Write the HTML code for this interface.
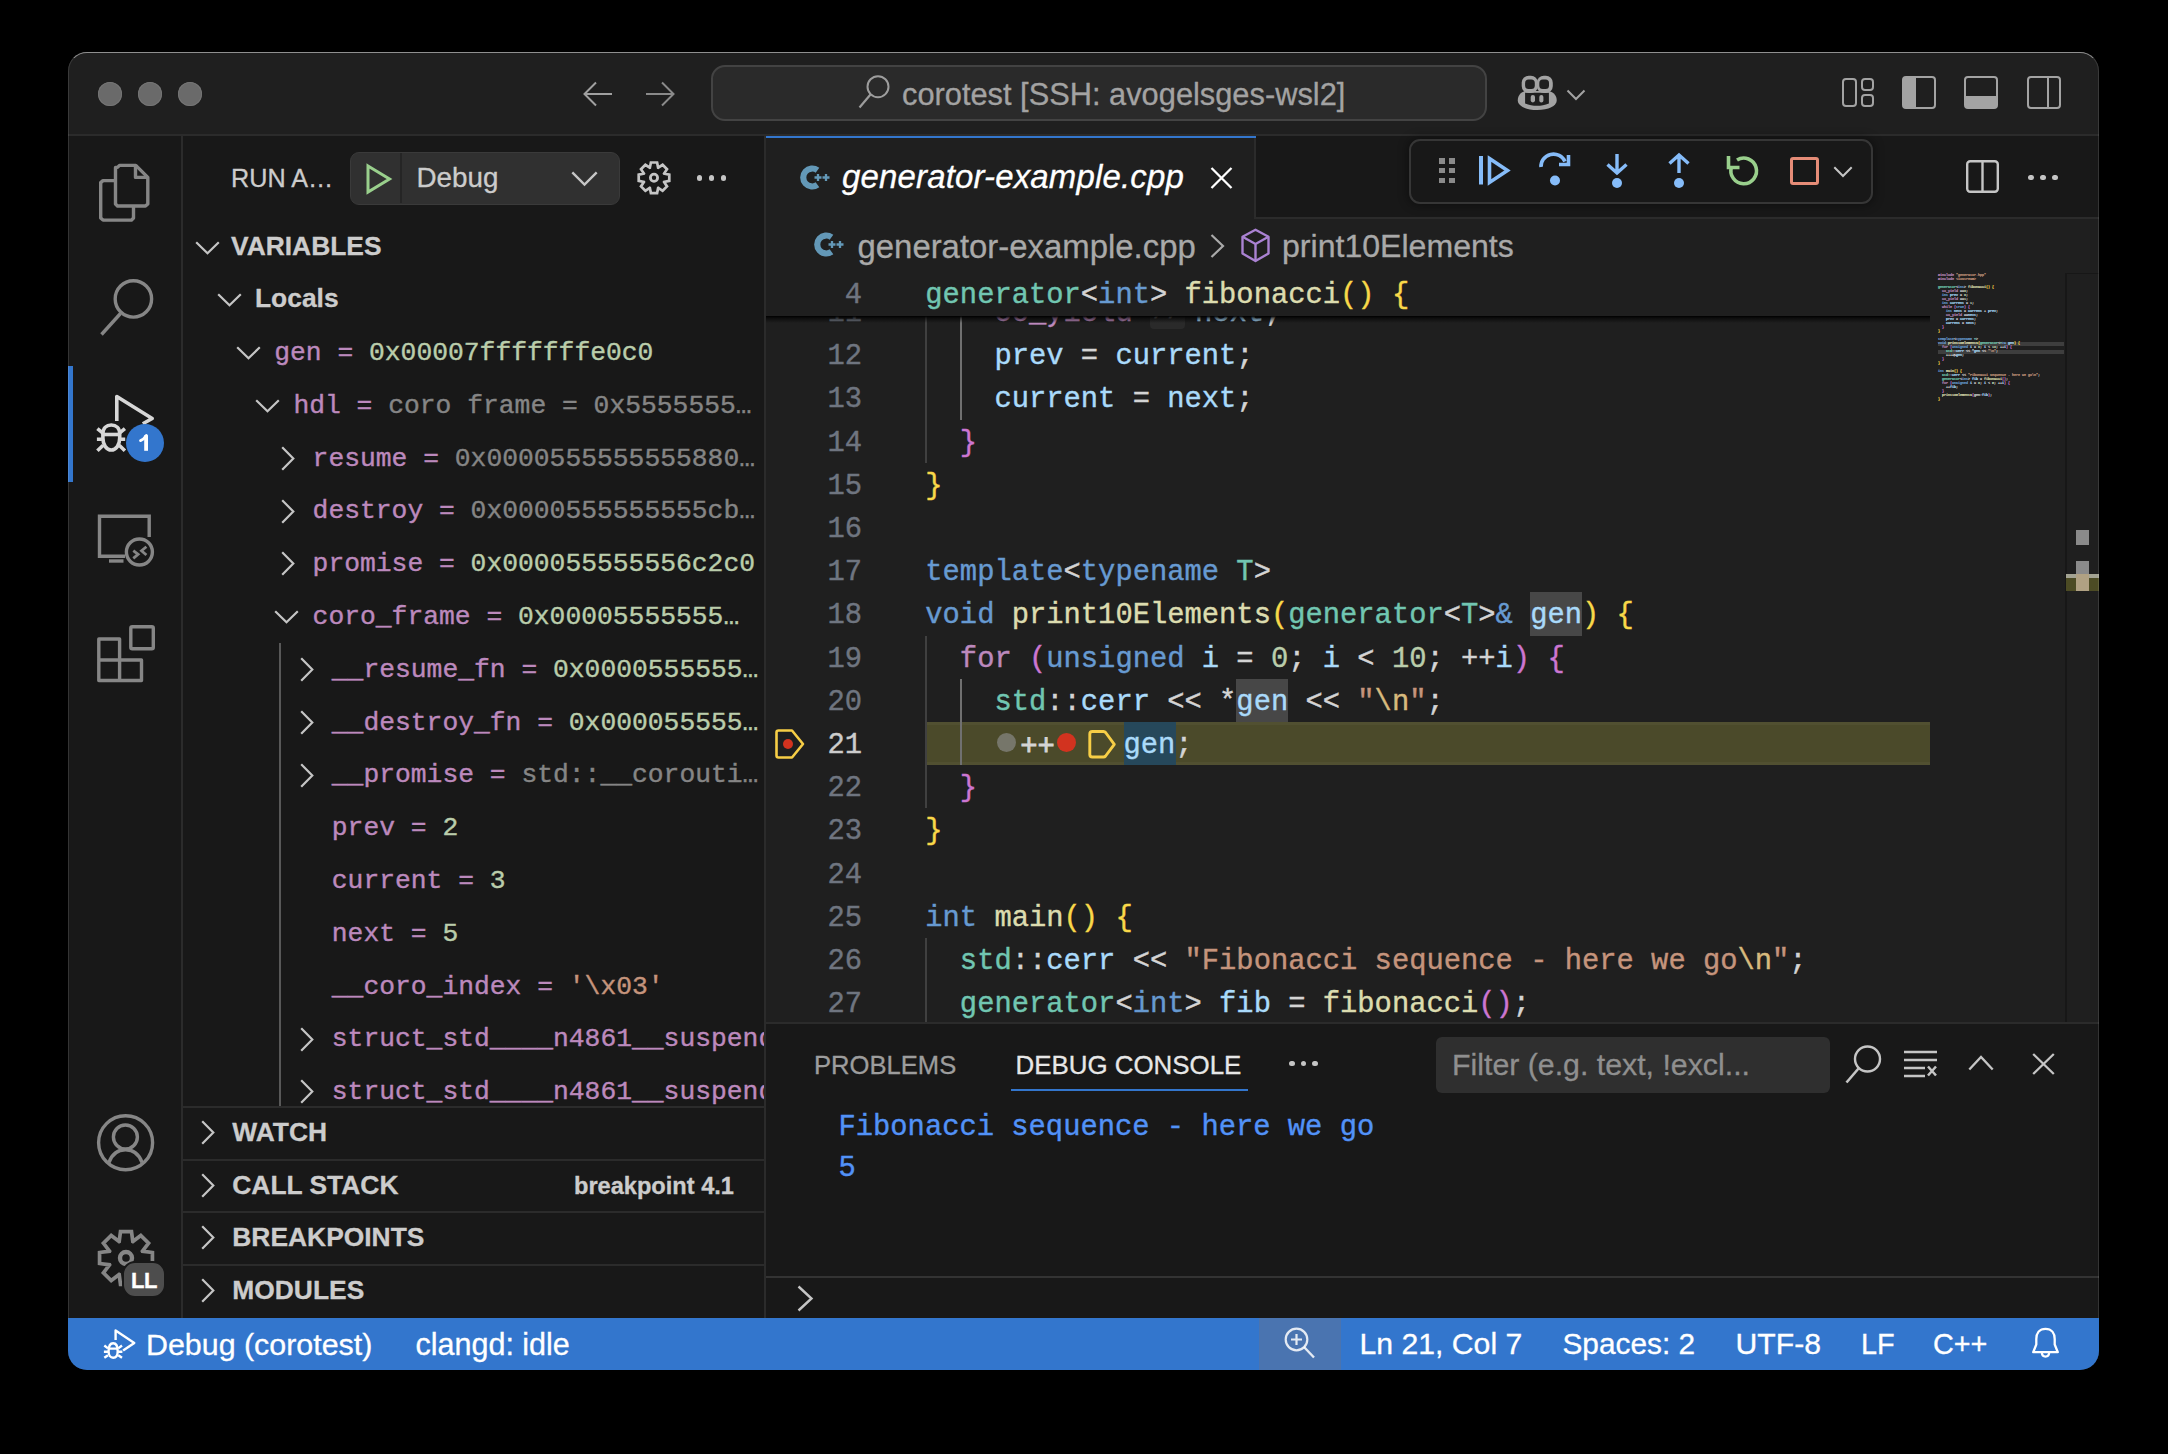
<!DOCTYPE html>
<html><head><meta charset="utf-8">
<style>
*{margin:0;padding:0;box-sizing:border-box}
html,body{width:2168px;height:1454px;background:#000;overflow:hidden;font-family:"Liberation Sans",sans-serif}
#win{position:absolute;left:0;top:0;width:2168px;height:1454px;clip-path:inset(52px 69px 84px 68px round 19px);background:#1f1f1f}
.a{position:absolute}
.t{position:absolute;white-space:nowrap;-webkit-text-stroke-width:0.3px}
.m{font-family:"Liberation Mono",monospace;-webkit-text-stroke-width:0.4px}
svg{position:absolute;overflow:visible}
</style></head><body>
<div id="win">
<!-- TITLEBAR -->
<div class="a" style="left:68px;top:52px;width:2031px;height:84px;background:#1f1f1f;border-bottom:2px solid #2b2b2b"></div>

<!-- traffic lights -->
<div class="a" style="left:98px;top:81.5px;width:24px;height:24px;border-radius:50%;background:#6a6a6a;box-shadow:inset 0 0 0 1px #747474"></div>
<div class="a" style="left:138px;top:81.5px;width:24px;height:24px;border-radius:50%;background:#6a6a6a;box-shadow:inset 0 0 0 1px #747474"></div>
<div class="a" style="left:178px;top:81.5px;width:24px;height:24px;border-radius:50%;background:#6a6a6a;box-shadow:inset 0 0 0 1px #747474"></div>
<!-- nav arrows -->
<svg style="left:583px;top:81px" width="30" height="26" viewBox="0 0 30 26"><path d="M13 1.5 L1.5 13 L13 24.5 M1.5 13 H29" fill="none" stroke="#a0a0a0" stroke-width="2"/></svg>
<svg style="left:646px;top:81px" width="30" height="26" viewBox="0 0 30 26"><path d="M16 1.5 L27.5 13 L16 24.5 M27.5 13 H0" fill="none" stroke="#8a8a8a" stroke-width="2"/></svg>
<!-- command center -->
<div class="a" style="left:711px;top:65px;width:776px;height:56px;border-radius:14px;background:#2a2a2a;border:2px solid #434343"></div>
<svg style="left:858px;top:74px" width="34" height="36" viewBox="0 0 34 36"><circle cx="20" cy="12.7" r="10.5" fill="none" stroke="#9d9d9d" stroke-width="2"/><path d="M12.5 20.5 L1.5 33.5" stroke="#9d9d9d" stroke-width="2.2" fill="none"/></svg>
<div class="t" style="left:902px;top:67.5px;line-height:54px;font-size:30.8px;color:#a3a3a3">corotest [SSH: avogelsges-wsl2]</div>
<!-- copilot -->
<svg style="left:1517px;top:75px" width="40" height="36" viewBox="0 0 40 36"><g fill="#a3a3a3">
<path d="M8 16 C3 17.5 0.8 21 0.8 25.5 C0.8 31 9 35 20.2 35 C31.5 35 39.7 31 39.7 25.5 C39.7 21 37.5 17.5 32 16 Z"/></g>
<path d="M8.1 17.7 H31.9 V28.5 C28 30 24 30.8 20 30.8 C16 30.8 12 30 8.1 28.5 Z" fill="#1f1f1f"/>
<rect x="4.7" y="0.8" width="16.2" height="17.2" rx="7" fill="#a3a3a3"/><rect x="19.8" y="0.8" width="16" height="17.2" rx="7" fill="#a3a3a3"/>
<rect x="8.1" y="4.6" width="9.7" height="9.4" rx="3.5" fill="#1f1f1f"/><rect x="22.3" y="4.6" width="9.7" height="9.4" rx="3.5" fill="#1f1f1f"/>
<rect x="13.7" y="20" width="4.3" height="7.4" rx="2.1" fill="#a3a3a3"/><rect x="22.3" y="20" width="4.1" height="7.4" rx="2" fill="#a3a3a3"/></svg>
<svg style="left:1566px;top:88.5px" width="20" height="12" viewBox="0 0 20 12"><path d="M1.5 1.5 L10 10 L18.5 1.5" fill="none" stroke="#a3a3a3" stroke-width="2"/></svg>
<!-- layout icons -->
<svg style="left:1842px;top:78px" width="32" height="30" viewBox="0 0 32 30"><rect x="1" y="1" width="13" height="27" rx="3" fill="none" stroke="#a3a3a3" stroke-width="2"/><rect x="20" y="1" width="11" height="11" rx="3" fill="none" stroke="#a3a3a3" stroke-width="2"/><rect x="20" y="17" width="11" height="11" rx="3" fill="none" stroke="#a3a3a3" stroke-width="2"/></svg>
<svg style="left:1902px;top:76px" width="34" height="33" viewBox="0 0 34 33"><rect x="1" y="1" width="32" height="31" rx="3" fill="none" stroke="#a3a3a3" stroke-width="2"/><path d="M1 4 Q1 1 4 1 H14 V32 H4 Q1 32 1 29 Z" fill="#a3a3a3"/></svg>
<svg style="left:1964px;top:76px" width="34" height="33" viewBox="0 0 34 33"><rect x="1" y="1" width="32" height="31" rx="3" fill="none" stroke="#a3a3a3" stroke-width="2"/><path d="M1 20 H33 V29 Q33 32 30 32 H4 Q1 32 1 29 Z" fill="#a3a3a3"/></svg>
<svg style="left:2027px;top:76px" width="34" height="33" viewBox="0 0 34 33"><rect x="1" y="1" width="32" height="31" rx="3" fill="none" stroke="#a3a3a3" stroke-width="2"/><path d="M21 1 V32" stroke="#a3a3a3" stroke-width="2"/></svg>
<!-- ACTIVITY BAR -->
<div class="a" style="left:68px;top:136px;width:115px;height:1183px;background:#181818;border-right:2px solid #2b2b2b"></div>

<!-- activity icons -->
<svg style="left:96px;top:160px" width="60" height="66" viewBox="0 0 60 66"><g fill="none" stroke="#868686" stroke-width="3.4" stroke-linejoin="round">
<path d="M21.5 7.4 L23.5 5.4 H39.8 L51.8 17.4 V44 L49.5 46 H21.5 L19.5 44 V7.4 Z"/><path d="M39.5 5.4 V17.4 H51.8"/>
<path d="M19.5 20.6 H7 L4.7 22.6 V58 L7 60.1 H35.5 L37.5 58 V46"/></g></svg>
<svg style="left:96px;top:276px" width="60" height="62" viewBox="0 0 60 62"><g fill="none" stroke="#868686" stroke-width="3.4"><circle cx="37.4" cy="22.9" r="18.2"/><path d="M24.5 37.5 L5.5 58.5"/></g></svg>
<!-- debug active -->
<svg style="left:90px;top:388px" width="70" height="70" viewBox="0 0 70 70"><g fill="none" stroke="#d7d7d7" stroke-width="3.6" stroke-linejoin="round" stroke-linecap="butt">
<path d="M26.8 33 V8.5 L62.2 30.5 L52.8 35.8"/>
<path d="M12.9 46 C12.9 40 16.5 37 21.3 37 C26.1 37 29.7 40 29.7 46 V50 C29.7 57 26.1 62 21.3 62 C16.5 62 12.9 57 12.9 50 Z"/>
<path d="M13 46.5 H29.6"/>
<path d="M7.4 40.7 L12.9 45.1 M34.9 40.7 L29.4 45.1 M6.9 51.2 H11.9 M30.7 51.2 H35.2 M7.4 62.7 L13.2 57.2 M34.9 62.7 L29.2 57.2"/></g></svg>
<div class="a" style="left:125.5px;top:424px;width:38px;height:38px;border-radius:50%;background:#3376cd"></div>
<svg style="left:139px;top:434px" width="11" height="18" viewBox="0 0 11 18"><path d="M7.1 1.2 V16.8" fill="none" stroke="#fff" stroke-width="3.8"/><path d="M1.5 6.6 C3.6 5.9 5.6 4.2 7.3 1.5" fill="none" stroke="#fff" stroke-width="2.8" stroke-linecap="round"/></svg>
<div class="a" style="left:68px;top:366px;width:5px;height:116px;background:#3376cd"></div>
<svg style="left:94px;top:510px" width="64" height="62" viewBox="0 0 64 62"><g fill="none" stroke="#868686" stroke-width="3.4">
<path d="M31 46.3 H5.5 V6.3 H55.2 V27"/><path d="M15 51 H29.5"/><circle cx="45.4" cy="42" r="13"/><path d="M39.3 40.6 L44.1 44.3 L39.3 48.4 M52.4 36.7 L47.5 40.8 L52.4 45" stroke-width="2.8"/></g></svg>
<svg style="left:94px;top:622px" width="64" height="64" viewBox="0 0 64 64"><g fill="none" stroke="#868686" stroke-width="3.4" stroke-linejoin="round">
<path d="M4.8 17 H25.6 V38 H4.8 Z M4.8 38 V58.5 H25.6 V38 M25.6 38 H47.5 V58.5 H25.6"/>
<rect x="36.8" y="4.8" width="22.5" height="22" rx="1.5"/></g></svg>
<!-- account -->
<svg style="left:94px;top:1111px" width="64" height="64" viewBox="0 0 64 64"><g fill="none" stroke="#868686" stroke-width="3.4">
<circle cx="31.6" cy="31.7" r="27"/><circle cx="31.4" cy="26" r="12"/><path d="M15 51.5 C18 43 24 38.8 31.5 38.8 C39 38.8 45 43 48 51.5"/></g></svg>
<!-- gear -->
<svg style="left:93.5px;top:1226px" width="64" height="64" viewBox="0 0 64 64"><g fill="none" stroke="#868686" stroke-width="3.7" stroke-linejoin="miter">
<path id="gearp" d="M25.20 15.55 L26.50 5.57 L37.50 5.57 L38.80 15.55 L38.82 15.56 L46.80 9.42 L54.58 17.20 L48.44 25.18 L48.45 25.20 L58.43 26.50 L58.43 37.50 L48.45 38.80 L48.44 38.82 L54.58 46.80 L46.80 54.58 L38.82 48.44 L38.80 48.45 L37.50 58.43 L26.50 58.43 L25.20 48.45 L25.18 48.44 L17.20 54.58 L9.42 46.80 L15.56 38.82 L15.55 38.80 L5.57 37.50 L5.57 26.50 L15.55 25.20 L15.56 25.18 L9.42 17.20 L17.20 9.42 L25.18 15.56 Z"/>
<circle cx="32" cy="32" r="6" stroke-width="4.4"/></g></svg>
<div class="a" style="left:122px;top:1261px;width:44px;height:37px;border-radius:13px;background:#4d4d4d;border:2px solid #181818"></div>
<div class="t" style="left:122px;top:1261.5px;width:44px;line-height:37px;text-align:center;font-weight:bold;font-size:22px;letter-spacing:-0.5px;color:#fff">LL</div>
<!-- SIDEBAR -->
<div class="a" style="left:183px;top:136px;width:583px;height:1183px;background:#181818;border-right:2px solid #2b2b2b"></div>
<!--SIDE-->
<div class="t" style="left:231px;top:152px;line-height:52px;font-size:25.2px;color:#cccccc">RUN A…</div>
<div class="a" style="left:350px;top:151.5px;width:270px;height:53px;border-radius:9px;background:#303030;border:1.5px solid #3a3a3a"></div>
<div class="a" style="left:400px;top:153px;width:2px;height:50px;background:#252525"></div>
<svg style="left:366px;top:164px" width="26" height="30" viewBox="0 0 26 30"><path d="M2 2 L23.5 15 L2 28 Z" fill="none" stroke="#99cf8c" stroke-width="3" stroke-linejoin="miter"/></svg>
<div class="t" style="left:416.5px;top:152px;line-height:52px;font-size:27.8px;color:#cccccc">Debug</div>
<svg style="left:571px;top:171px" width="27" height="15" viewBox="0 0 27 15"><path d="M1.3 1.3 L13.5 13.5 L25.7 1.3" fill="none" stroke="#c5c5c5" stroke-width="2.4"/></svg>
<svg style="left:636px;top:161px" width="36" height="35" viewBox="0 0 36 35"><g fill="none" stroke="#c5c5c5" stroke-width="2.7" stroke-linejoin="miter"><path d="M13.85 6.72 L14.90 1.51 L21.10 1.51 L22.15 6.72 L22.19 6.74 L26.62 3.80 L31.00 8.18 L28.06 12.61 L28.08 12.65 L33.29 13.70 L33.29 19.90 L28.08 20.95 L28.06 20.99 L31.00 25.42 L26.62 29.80 L22.19 26.86 L22.15 26.88 L21.10 32.09 L14.90 32.09 L13.85 26.88 L13.81 26.86 L9.38 29.80 L5.00 25.42 L7.94 20.99 L7.92 20.95 L2.71 19.90 L2.71 13.70 L7.92 12.65 L7.94 12.61 L5.00 8.18 L9.38 3.80 L13.81 6.74 Z"/><circle cx="18" cy="16.8" r="3.6" stroke-width="2.8"/></g></svg>
<div class="a" style="left:696.9px;top:175.4px;width:5.2px;height:5.2px;border-radius:50%;background:#c5c5c5"></div>
<div class="a" style="left:708.9px;top:175.4px;width:5.2px;height:5.2px;border-radius:50%;background:#c5c5c5"></div>
<div class="a" style="left:720.9px;top:175.4px;width:5.2px;height:5.2px;border-radius:50%;background:#c5c5c5"></div>
<svg style="left:195.3px;top:240.9px" width="25" height="14" viewBox="0 0 25 14"><path d="M1.2 1.2 L12.5 12.3 L23.8 1.2" fill="none" stroke="#c5c5c5" stroke-width="2.2"/></svg>
<div class="t" style="left:231px;top:220px;line-height:53px;font-weight:bold;font-size:26.4px;color:#cccccc">VARIABLES</div>
<svg style="left:216.6px;top:292.9px" width="25" height="14" viewBox="0 0 25 14"><path d="M1.2 1.2 L12.5 12.3 L23.8 1.2" fill="none" stroke="#c5c5c5" stroke-width="2.2"/></svg>
<div class="t" style="left:255px;top:272px;line-height:53px;font-weight:bold;font-size:26.4px;color:#cccccc">Locals</div>
<div class="a" style="left:183px;top:324px;width:581px;height:782px;overflow:hidden">
<svg style="left:52.8px;top:21.7px" width="25" height="14" viewBox="0 0 25 14"><path d="M1.2 1.2 L12.5 12.3 L23.8 1.2" fill="none" stroke="#c5c5c5" stroke-width="2.2"/></svg>
<div class="t m" style="left:91.2px;top:3.0px;line-height:52.8px;font-size:26.33px;color:#bc89bd">gen = <span style="color:#bacdab">0x00007fffffffe0c0</span></div>
<svg style="left:72.0px;top:74.5px" width="25" height="14" viewBox="0 0 25 14"><path d="M1.2 1.2 L12.5 12.3 L23.8 1.2" fill="none" stroke="#c5c5c5" stroke-width="2.2"/></svg>
<div class="t m" style="left:110.4px;top:55.8px;line-height:52.8px;font-size:26.33px;color:#bc89bd">hdl = <span style="color:#858585">coro frame = 0x5555555…</span></div>
<svg style="left:97.8px;top:121.8px" width="14" height="25" viewBox="0 0 14 25"><path d="M1.2 1.2 L12.3 12.5 L1.2 23.8" fill="none" stroke="#c5c5c5" stroke-width="2.2"/></svg>
<div class="t m" style="left:129.6px;top:108.6px;line-height:52.8px;font-size:26.33px;color:#bc89bd">resume = <span style="color:#858585">0x0000555555555880…</span></div>
<svg style="left:97.8px;top:174.6px" width="14" height="25" viewBox="0 0 14 25"><path d="M1.2 1.2 L12.3 12.5 L1.2 23.8" fill="none" stroke="#c5c5c5" stroke-width="2.2"/></svg>
<div class="t m" style="left:129.6px;top:161.4px;line-height:52.8px;font-size:26.33px;color:#bc89bd">destroy = <span style="color:#858585">0x0000555555555cb…</span></div>
<svg style="left:97.8px;top:227.4px" width="14" height="25" viewBox="0 0 14 25"><path d="M1.2 1.2 L12.3 12.5 L1.2 23.8" fill="none" stroke="#c5c5c5" stroke-width="2.2"/></svg>
<div class="t m" style="left:129.6px;top:214.2px;line-height:52.8px;font-size:26.33px;color:#bc89bd">promise = <span style="color:#bacdab">0x000055555556c2c0</span></div>
<svg style="left:91.2px;top:285.7px" width="25" height="14" viewBox="0 0 25 14"><path d="M1.2 1.2 L12.5 12.3 L23.8 1.2" fill="none" stroke="#c5c5c5" stroke-width="2.2"/></svg>
<div class="t m" style="left:129.6px;top:267.0px;line-height:52.8px;font-size:26.33px;color:#bc89bd">coro_frame = <span style="color:#bacdab">0x00005555555…</span></div>
<svg style="left:116.9px;top:333.0px" width="14" height="25" viewBox="0 0 14 25"><path d="M1.2 1.2 L12.3 12.5 L1.2 23.8" fill="none" stroke="#c5c5c5" stroke-width="2.2"/></svg>
<div class="t m" style="left:148.8px;top:319.8px;line-height:52.8px;font-size:26.33px;color:#bc89bd">__resume_fn = <span style="color:#bacdab">0x0000555555…</span></div>
<svg style="left:116.9px;top:385.8px" width="14" height="25" viewBox="0 0 14 25"><path d="M1.2 1.2 L12.3 12.5 L1.2 23.8" fill="none" stroke="#c5c5c5" stroke-width="2.2"/></svg>
<div class="t m" style="left:148.8px;top:372.6px;line-height:52.8px;font-size:26.33px;color:#bc89bd">__destroy_fn = <span style="color:#bacdab">0x000055555…</span></div>
<svg style="left:116.9px;top:438.6px" width="14" height="25" viewBox="0 0 14 25"><path d="M1.2 1.2 L12.3 12.5 L1.2 23.8" fill="none" stroke="#c5c5c5" stroke-width="2.2"/></svg>
<div class="t m" style="left:148.8px;top:425.4px;line-height:52.8px;font-size:26.33px;color:#bc89bd">__promise = <span style="color:#858585">std::__corouti…</span></div>
<div class="t m" style="left:148.8px;top:478.2px;line-height:52.8px;font-size:26.33px;color:#bc89bd">prev = <span style="color:#bacdab">2</span></div>
<div class="t m" style="left:148.8px;top:531.0px;line-height:52.8px;font-size:26.33px;color:#bc89bd">current = <span style="color:#bacdab">3</span></div>
<div class="t m" style="left:148.8px;top:583.8px;line-height:52.8px;font-size:26.33px;color:#bc89bd">next = <span style="color:#bacdab">5</span></div>
<div class="t m" style="left:148.8px;top:636.6px;line-height:52.8px;font-size:26.33px;color:#bc89bd">__coro_index = <span style="color:#c5947c">'\x03'</span></div>
<svg style="left:116.9px;top:702.6px" width="14" height="25" viewBox="0 0 14 25"><path d="M1.2 1.2 L12.3 12.5 L1.2 23.8" fill="none" stroke="#c5c5c5" stroke-width="2.2"/></svg>
<div class="t m" style="left:148.8px;top:689.4px;line-height:52.8px;font-size:26.33px;color:#bc89bd">struct_std____n4861__suspend_always</div>
<svg style="left:116.9px;top:755.4px" width="14" height="25" viewBox="0 0 14 25"><path d="M1.2 1.2 L12.3 12.5 L1.2 23.8" fill="none" stroke="#c5c5c5" stroke-width="2.2"/></svg>
<div class="t m" style="left:148.8px;top:742.2px;line-height:52.8px;font-size:26.33px;color:#bc89bd">struct_std____n4861__suspend_always</div>
<div class="a" style="left:95.9px;top:319px;width:2px;height:470px;background:#585858"></div>
</div>
<div class="a" style="left:183px;top:1105.8px;width:582px;height:2px;background:#2b2b2b"></div>
<svg style="left:200.7px;top:1119.8px" width="14" height="25" viewBox="0 0 14 25"><path d="M1.2 1.2 L12.3 12.5 L1.2 23.8" fill="none" stroke="#c5c5c5" stroke-width="2.2"/></svg>
<div class="t" style="left:232.3px;top:1105.8px;line-height:53px;font-weight:bold;font-size:26.4px;color:#cccccc">WATCH</div>
<div class="a" style="left:183px;top:1158.6px;width:582px;height:2px;background:#2b2b2b"></div>
<svg style="left:200.7px;top:1172.6px" width="14" height="25" viewBox="0 0 14 25"><path d="M1.2 1.2 L12.3 12.5 L1.2 23.8" fill="none" stroke="#c5c5c5" stroke-width="2.2"/></svg>
<div class="t" style="left:232.3px;top:1158.6px;line-height:53px;font-weight:bold;font-size:26.4px;color:#cccccc">CALL STACK</div>
<div class="t" style="left:574px;top:1159.6px;line-height:53px;font-weight:bold;font-size:23.6px;color:#cccccc">breakpoint 4.1</div>
<div class="a" style="left:183px;top:1211.4px;width:582px;height:2px;background:#2b2b2b"></div>
<svg style="left:200.7px;top:1225.4px" width="14" height="25" viewBox="0 0 14 25"><path d="M1.2 1.2 L12.3 12.5 L1.2 23.8" fill="none" stroke="#c5c5c5" stroke-width="2.2"/></svg>
<div class="t" style="left:232.3px;top:1211.4px;line-height:53px;font-weight:bold;font-size:26.4px;color:#cccccc">BREAKPOINTS</div>
<div class="a" style="left:183px;top:1264.2px;width:582px;height:2px;background:#2b2b2b"></div>
<svg style="left:200.7px;top:1278.2px" width="14" height="25" viewBox="0 0 14 25"><path d="M1.2 1.2 L12.3 12.5 L1.2 23.8" fill="none" stroke="#c5c5c5" stroke-width="2.2"/></svg>
<div class="t" style="left:232.3px;top:1264.2px;line-height:53px;font-weight:bold;font-size:26.4px;color:#cccccc">MODULES</div>
<!--/SIDE-->
<!-- TABBAR -->
<div class="a" style="left:766px;top:136px;width:1333px;height:83px;background:#181818;border-bottom:2px solid #2b2b2b"></div>
<!--EDITOR-->
<div class="a" style="left:766px;top:272px;width:1300px;height:750px;overflow:hidden">
<div class="a" style="left:159px;top:450.0px;width:1005px;height:43.2px;background:#4b4a2a;box-shadow:inset 0 3px 0 rgba(255,255,255,0.035),inset 0 -3px 0 rgba(255,255,255,0.035)"></div>
<div class="a" style="left:764.1px;top:320.4px;width:51.8px;height:43.2px;background:#474747"></div>
<div class="a" style="left:470.3px;top:406.8px;width:51.8px;height:43.2px;background:#474747"></div>
<div class="a" style="left:357.5px;top:450.0px;width:52.6px;height:43.2px;background:#26485b"></div>
<div class="a" style="left:159.3px;top:18.0px;width:2px;height:172.8px;background:#404040"></div>
<div class="a" style="left:193.9px;top:18.0px;width:2px;height:129.6px;background:#707070"></div>
<div class="a" style="left:159.3px;top:363.6px;width:2px;height:172.8px;background:#404040"></div>
<div class="a" style="left:193.9px;top:406.8px;width:2px;height:86.4px;background:#707070"></div>
<div class="a" style="left:159.3px;top:666.0px;width:2px;height:129.6px;background:#404040"></div>
<div class="t m" style="left:-66px;width:162px;text-align:right;top:19.9px;line-height:43.2px;font-size:28.8px;color:#6f7580">11</div>
<div class="t m" style="left:-66px;width:162px;text-align:right;top:63.1px;line-height:43.2px;font-size:28.8px;color:#6f7580">12</div>
<div class="t m" style="left:-66px;width:162px;text-align:right;top:106.3px;line-height:43.2px;font-size:28.8px;color:#6f7580">13</div>
<div class="t m" style="left:-66px;width:162px;text-align:right;top:149.5px;line-height:43.2px;font-size:28.8px;color:#6f7580">14</div>
<div class="t m" style="left:-66px;width:162px;text-align:right;top:192.7px;line-height:43.2px;font-size:28.8px;color:#6f7580">15</div>
<div class="t m" style="left:-66px;width:162px;text-align:right;top:235.9px;line-height:43.2px;font-size:28.8px;color:#6f7580">16</div>
<div class="t m" style="left:-66px;width:162px;text-align:right;top:279.1px;line-height:43.2px;font-size:28.8px;color:#6f7580">17</div>
<div class="t m" style="left:-66px;width:162px;text-align:right;top:322.3px;line-height:43.2px;font-size:28.8px;color:#6f7580">18</div>
<div class="t m" style="left:-66px;width:162px;text-align:right;top:365.5px;line-height:43.2px;font-size:28.8px;color:#6f7580">19</div>
<div class="t m" style="left:-66px;width:162px;text-align:right;top:408.7px;line-height:43.2px;font-size:28.8px;color:#6f7580">20</div>
<div class="t m" style="left:-66px;width:162px;text-align:right;top:451.9px;line-height:43.2px;font-size:28.8px;color:#cccccc">21</div>
<div class="t m" style="left:-66px;width:162px;text-align:right;top:495.1px;line-height:43.2px;font-size:28.8px;color:#6f7580">22</div>
<div class="t m" style="left:-66px;width:162px;text-align:right;top:538.3px;line-height:43.2px;font-size:28.8px;color:#6f7580">23</div>
<div class="t m" style="left:-66px;width:162px;text-align:right;top:581.5px;line-height:43.2px;font-size:28.8px;color:#6f7580">24</div>
<div class="t m" style="left:-66px;width:162px;text-align:right;top:624.7px;line-height:43.2px;font-size:28.8px;color:#6f7580">25</div>
<div class="t m" style="left:-66px;width:162px;text-align:right;top:667.9px;line-height:43.2px;font-size:28.8px;color:#6f7580">26</div>
<div class="t m" style="left:-66px;width:162px;text-align:right;top:711.1px;line-height:43.2px;font-size:28.8px;color:#6f7580">27</div>
<div class="t m" style="left:-66px;width:162px;text-align:right;top:754.3px;line-height:43.2px;font-size:28.8px;color:#6f7580">28</div>
<div class="t m" style="left:159.3px;top:19.9px;line-height:43.2px;font-size:28.8px;white-space:pre"><span style="color:#d4d4d4">    </span><span style="color:#bc89bd">co_yield</span><span style="color:#d4d4d4"> </span></div>
<div class="t m" style="left:159.3px;top:63.1px;line-height:43.2px;font-size:28.8px;white-space:pre"><span style="color:#d4d4d4">    </span><span style="color:#aadafa">prev</span><span style="color:#d4d4d4"> = </span><span style="color:#aadafa">current</span><span style="color:#d4d4d4">;</span></div>
<div class="t m" style="left:159.3px;top:106.3px;line-height:43.2px;font-size:28.8px;white-space:pre"><span style="color:#d4d4d4">    </span><span style="color:#aadafa">current</span><span style="color:#d4d4d4"> = </span><span style="color:#aadafa">next</span><span style="color:#d4d4d4">;</span></div>
<div class="t m" style="left:159.3px;top:149.5px;line-height:43.2px;font-size:28.8px;white-space:pre"><span style="color:#d4d4d4">  </span><span style="color:#cc76d1">}</span></div>
<div class="t m" style="left:159.3px;top:192.7px;line-height:43.2px;font-size:28.8px;white-space:pre"><span style="color:#f9d849">}</span></div>
<div class="t m" style="left:159.3px;top:279.1px;line-height:43.2px;font-size:28.8px;white-space:pre"><span style="color:#679ad1">template</span><span style="color:#d4d4d4">&lt;</span><span style="color:#679ad1">typename</span><span style="color:#d4d4d4"> </span><span style="color:#71c6b1">T</span><span style="color:#d4d4d4">&gt;</span></div>
<div class="t m" style="left:159.3px;top:322.3px;line-height:43.2px;font-size:28.8px;white-space:pre"><span style="color:#679ad1">void</span><span style="color:#d4d4d4"> </span><span style="color:#dcdcaf">print10Elements</span><span style="color:#f9d849">(</span><span style="color:#71c6b1">generator</span><span style="color:#d4d4d4">&lt;</span><span style="color:#71c6b1">T</span><span style="color:#d4d4d4">&gt;</span><span style="color:#679ad1">&amp;</span><span style="color:#d4d4d4"> </span><span style="color:#aadafa">gen</span><span style="color:#f9d849">)</span><span style="color:#d4d4d4"> </span><span style="color:#f9d849">{</span></div>
<div class="t m" style="left:159.3px;top:365.5px;line-height:43.2px;font-size:28.8px;white-space:pre"><span style="color:#d4d4d4">  </span><span style="color:#bc89bd">for</span><span style="color:#d4d4d4"> </span><span style="color:#cc76d1">(</span><span style="color:#679ad1">unsigned</span><span style="color:#d4d4d4"> </span><span style="color:#aadafa">i</span><span style="color:#d4d4d4"> = </span><span style="color:#bacdab">0</span><span style="color:#d4d4d4">; </span><span style="color:#aadafa">i</span><span style="color:#d4d4d4"> &lt; </span><span style="color:#bacdab">10</span><span style="color:#d4d4d4">; ++</span><span style="color:#aadafa">i</span><span style="color:#cc76d1">)</span><span style="color:#d4d4d4"> </span><span style="color:#cc76d1">{</span></div>
<div class="t m" style="left:159.3px;top:408.7px;line-height:43.2px;font-size:28.8px;white-space:pre"><span style="color:#d4d4d4">    </span><span style="color:#71c6b1">std</span><span style="color:#d4d4d4">::</span><span style="color:#aadafa">cerr</span><span style="color:#d4d4d4"> &lt;&lt; *</span><span style="color:#aadafa">gen</span><span style="color:#d4d4d4"> &lt;&lt; </span><span style="color:#c5947c">&quot;</span><span style="color:#d7ba7d">\n</span><span style="color:#c5947c">&quot;</span><span style="color:#d4d4d4">;</span></div>
<div class="t m" style="left:159.3px;top:495.1px;line-height:43.2px;font-size:28.8px;white-space:pre"><span style="color:#d4d4d4">  </span><span style="color:#cc76d1">}</span></div>
<div class="t m" style="left:159.3px;top:538.3px;line-height:43.2px;font-size:28.8px;white-space:pre"><span style="color:#f9d849">}</span></div>
<div class="t m" style="left:159.3px;top:624.7px;line-height:43.2px;font-size:28.8px;white-space:pre"><span style="color:#679ad1">int</span><span style="color:#d4d4d4"> </span><span style="color:#dcdcaf">main</span><span style="color:#f9d849">()</span><span style="color:#d4d4d4"> </span><span style="color:#f9d849">{</span></div>
<div class="t m" style="left:159.3px;top:667.9px;line-height:43.2px;font-size:28.8px;white-space:pre"><span style="color:#d4d4d4">  </span><span style="color:#71c6b1">std</span><span style="color:#d4d4d4">::</span><span style="color:#aadafa">cerr</span><span style="color:#d4d4d4"> &lt;&lt; </span><span style="color:#c5947c">&quot;Fibonacci sequence - here we go</span><span style="color:#d7ba7d">\n</span><span style="color:#c5947c">&quot;</span><span style="color:#d4d4d4">;</span></div>
<div class="t m" style="left:159.3px;top:711.1px;line-height:43.2px;font-size:28.8px;white-space:pre"><span style="color:#d4d4d4">  </span><span style="color:#71c6b1">generator</span><span style="color:#d4d4d4">&lt;</span><span style="color:#679ad1">int</span><span style="color:#d4d4d4">&gt;</span><span style="color:#d4d4d4"> </span><span style="color:#aadafa">fib</span><span style="color:#d4d4d4"> = </span><span style="color:#dcdcaf">fibonacci</span><span style="color:#cc76d1">()</span><span style="color:#d4d4d4">;</span></div>
<div class="t m" style="left:159.3px;top:754.3px;line-height:43.2px;font-size:28.8px;white-space:pre"><span style="color:#d4d4d4">  </span><span style="color:#bc89bd">for</span><span style="color:#d4d4d4"> </span><span style="color:#cc76d1">(</span><span style="color:#679ad1">unsigned</span><span style="color:#d4d4d4"> </span><span style="color:#aadafa">i</span><span style="color:#d4d4d4"> = </span><span style="color:#bacdab">0</span><span style="color:#d4d4d4">; </span><span style="color:#aadafa">i</span><span style="color:#d4d4d4"> &lt; </span><span style="color:#bacdab">5</span><span style="color:#d4d4d4">; ++</span><span style="color:#aadafa">i</span><span style="color:#cc76d1">)</span><span style="color:#d4d4d4"> </span><span style="color:#cc76d1">{</span></div>
<div class="a" style="left:384px;top:23.0px;width:35px;height:34px;border-radius:4px;background:#2a2a2a"></div>
<div class="t m" style="left:387px;top:18.0px;line-height:43.2px;font-size:24px;color:#8b8b8b;white-space:pre">//</div>
<div class="t m" style="left:429px;top:19.9px;line-height:43.2px;font-size:28.8px;white-space:pre"><span style="color:#aadafa">next</span><span style="color:#d4d4d4">;</span></div>
<div class="a" style="left:230.89999999999998px;top:461.0px;width:19.3px;height:19.3px;border-radius:50%;background:#76766a"></div>
<div class="t m" style="left:254.29999999999995px;top:453.9px;line-height:43.2px;font-size:28.8px;color:#d4d4d4;-webkit-text-stroke-width:0.9px">++</div>
<div class="a" style="left:291.0999999999999px;top:461.0px;width:19.3px;height:19.3px;border-radius:50%;background:#d2331f"></div>
<svg style="left:321px;top:456.5px" width="30" height="31" viewBox="0 0 30 31"><path d="M2.8 5 Q2.8 2.5 5.3 2.5 H16.5 Q17.8 2.5 18.6 3.5 L27.3 15.3 L18.6 27 Q17.8 28 16.5 28 H5.3 Q2.8 28 2.8 25.5 Z" fill="none" stroke="#f7ce46" stroke-width="2.9" stroke-linejoin="round"/></svg>
<div class="t m" style="left:357.5px;top:451.9px;line-height:43.2px;font-size:28.8px;white-space:pre"><span style="color:#aadafa">gen</span><span style="color:#d4d4d4">;</span></div>
<svg style="left:8px;top:456.0px" width="32" height="32" viewBox="0 0 32 32"><path d="M2.5 4.5 Q2.5 2.5 4.5 2.5 H18 L29 16 L18 29.5 H4.5 Q2.5 29.5 2.5 27.5 Z" fill="none" stroke="#f7ce46" stroke-width="2.6" stroke-linejoin="round"/><circle cx="14" cy="16" r="5" fill="#d2331f"/></svg>
</div>
<div class="a" style="left:766px;top:272px;width:1164px;height:43.5px;background:#1f1f1f"></div>
<div class="a" style="left:766px;top:315.5px;width:1164px;height:7px;background:linear-gradient(#000000 0%,rgba(0,0,0,0.55) 35%,rgba(0,0,0,0) 100%)"></div>
<div class="t m" style="left:700px;width:162px;text-align:right;top:274.2px;line-height:43.2px;font-size:28.8px;color:#6f7580">4</div>
<div class="t m" style="left:925.3px;top:274.2px;line-height:43.2px;font-size:28.8px;white-space:pre"><span style="color:#71c6b1">generator</span><span style="color:#d4d4d4">&lt;</span><span style="color:#679ad1">int</span><span style="color:#d4d4d4">&gt;</span><span style="color:#d4d4d4"> </span><span style="color:#dcdcaf">fibonacci</span><span style="color:#f9d849">()</span><span style="color:#d4d4d4"> </span><span style="color:#f9d849">{</span></div>
<!--/EDITOR-->
<!--TABS-->
<div class="a" style="left:766px;top:136px;width:490px;height:83px;background:#1f1f1f;border-right:2px solid #2b2b2b"></div>
<div class="a" style="left:766px;top:136px;width:490px;height:2.3px;background:#3376cd"></div>
<svg style="left:802px;top:164.5px" width="28.0" height="25.0" viewBox="0 0 28 25"><path d="M15.5 5.2 A9 9 0 1 0 15.5 19.8" fill="none" stroke="#6398b7" stroke-width="6.2"/><path d="M12.5 12.5 H19.5 M16 9 V16 M20.5 12.5 H27.5 M24 9 V16" stroke="#6398b7" stroke-width="2.3"/></svg>
<div class="t" style="left:842px;top:135px;line-height:84px;font-size:33px;font-style:italic;color:#ffffff;letter-spacing:0.15px">generator-example.cpp</div>
<svg style="left:1210px;top:167px" width="23" height="22" viewBox="0 0 23 22"><path d="M1.5 1 L21.5 21 M21.5 1 L1.5 21" stroke="#ffffff" stroke-width="2.3"/></svg>
<svg style="left:816px;top:232px" width="28.0" height="25.0" viewBox="0 0 28 25"><path d="M15.5 5.2 A9 9 0 1 0 15.5 19.8" fill="none" stroke="#6398b7" stroke-width="6.2"/><path d="M12.5 12.5 H19.5 M16 9 V16 M20.5 12.5 H27.5 M24 9 V16" stroke="#6398b7" stroke-width="2.3"/></svg>
<div class="t" style="left:857.5px;top:220px;line-height:53px;font-size:32.9px;color:#a9a9a9">generator-example.cpp</div>
<svg style="left:1210px;top:234px" width="15" height="24" viewBox="0 0 15 24"><path d="M1.5 1 L13 12 L1.5 23" fill="none" stroke="#a9a9a9" stroke-width="2.2"/></svg>
<svg style="left:1240px;top:228px" width="31" height="35" viewBox="0 0 31 35"><g fill="none" stroke="#aa82d2" stroke-width="2.4" stroke-linejoin="round"><path d="M15.5 1.8 L28.5 8.8 V25.5 L15.5 33 L2.5 25.5 V8.8 Z"/><path d="M2.5 8.8 L15.5 16 L28.5 8.8 M15.5 16 V33"/></g></svg>
<div class="t" style="left:1282px;top:220px;line-height:53px;font-size:32.1px;color:#a9a9a9">print10Elements</div>
<div class="a" style="left:1409px;top:139px;width:464px;height:65px;border-radius:11px;background:#181818;border:2px solid #363636;box-shadow:0 0 10px 2px rgba(0,0,0,0.35)"></div>
<div class="a" style="left:1439.3px;top:158.3px;width:5.4px;height:5.4px;background:#8a8a8a"></div>
<div class="a" style="left:1439.3px;top:168.0px;width:5.4px;height:5.4px;background:#8a8a8a"></div>
<div class="a" style="left:1439.3px;top:177.7px;width:5.4px;height:5.4px;background:#8a8a8a"></div>
<div class="a" style="left:1449.3px;top:158.3px;width:5.4px;height:5.4px;background:#8a8a8a"></div>
<div class="a" style="left:1449.3px;top:168.0px;width:5.4px;height:5.4px;background:#8a8a8a"></div>
<div class="a" style="left:1449.3px;top:177.7px;width:5.4px;height:5.4px;background:#8a8a8a"></div>
<svg style="left:1476px;top:154px" width="36" height="34" viewBox="0 0 36 34"><path d="M5 2 V30.5" stroke="#86bcf9" stroke-width="4"/><path d="M13.5 4.5 L31.5 16.5 L13.5 28.5 Z" fill="none" stroke="#86bcf9" stroke-width="3.6" stroke-linejoin="miter"/></svg>
<svg style="left:1537px;top:152px" width="36" height="36" viewBox="0 0 36 36"><path d="M4 15 A12.5 12 0 0 1 28 9.5" fill="none" stroke="#86bcf9" stroke-width="3.6"/><path d="M31.5 3 V12.5 H22" fill="none" stroke="#86bcf9" stroke-width="3.6"/><circle cx="18" cy="28.5" r="5" fill="#86bcf9"/></svg>
<svg style="left:1604px;top:152px" width="26" height="38" viewBox="0 0 26 38"><path d="M13 2 V20 M3.5 12.5 L13 21 L22.5 12.5" fill="none" stroke="#86bcf9" stroke-width="3.4"/><circle cx="13" cy="31" r="5" fill="#86bcf9"/></svg>
<svg style="left:1666px;top:152px" width="26" height="38" viewBox="0 0 26 38"><path d="M13 21 V3 M3.5 11.5 L13 3 L22.5 11.5" fill="none" stroke="#86bcf9" stroke-width="3.4"/><circle cx="13" cy="31" r="5" fill="#86bcf9"/></svg>
<svg style="left:1725px;top:153px" width="36" height="36" viewBox="0 0 36 36"><path d="M6.5 14 A12.8 12.8 0 1 0 12 7" fill="none" stroke="#99cf8c" stroke-width="3.6"/><path d="M3.5 3 V14.5 H14.5" fill="none" stroke="#99cf8c" stroke-width="3.6"/></svg>
<div class="a" style="left:1789.5px;top:156.5px;width:29.5px;height:28.5px;border:3.2px solid #e58c77;border-radius:3px"></div>
<svg style="left:1833px;top:166px" width="20" height="12" viewBox="0 0 20 12"><path d="M1.3 1.3 L10 10 L18.7 1.3" fill="none" stroke="#c5c5c5" stroke-width="2"/></svg>
<svg style="left:1966px;top:160px" width="33" height="33" viewBox="0 0 33 33"><rect x="1.2" y="1.2" width="30.6" height="30.6" rx="3" fill="none" stroke="#c5c5c5" stroke-width="2.4"/><path d="M16.5 1.2 V31.8" stroke="#c5c5c5" stroke-width="2.4"/></svg>
<div class="a" style="left:2028.4px;top:174.9px;width:5.2px;height:5.2px;border-radius:50%;background:#c5c5c5"></div>
<div class="a" style="left:2040.4px;top:174.9px;width:5.2px;height:5.2px;border-radius:50%;background:#c5c5c5"></div>
<div class="a" style="left:2052.4px;top:174.9px;width:5.2px;height:5.2px;border-radius:50%;background:#c5c5c5"></div>
<div class="a" style="left:1938px;top:342.0px;width:126px;height:4px;background:#3e3e3e"></div>
<div class="a" style="left:1938px;top:350.1px;width:126px;height:4px;background:#3e3e3e"></div>
<div class="t" style="left:1938px;top:272.5px;font-family:Liberation Mono;font-size:3.3333px;line-height:4.03px;white-space:pre;font-weight:bold;-webkit-text-stroke-width:0.15px"><span style="color:#bc89bd">#include</span><span style="color:#d4d4d4"> </span><span style="color:#c5947c">&quot;generator.hpp&quot;</span>
<span style="color:#bc89bd">#include</span><span style="color:#d4d4d4"> </span><span style="color:#c5947c">&lt;iostream&gt;</span>

<span style="color:#71c6b1">generator</span><span style="color:#d4d4d4">&lt;</span><span style="color:#679ad1">int</span><span style="color:#d4d4d4">&gt; </span><span style="color:#dcdcaf">fibonacci</span><span style="color:#f9d849">() {</span>
<span style="color:#d4d4d4">  </span><span style="color:#bc89bd">co_yield</span><span style="color:#d4d4d4"> </span><span style="color:#d4d4d4">==</span><span style="color:#bacdab">0</span><span style="color:#d4d4d4">;</span>
<span style="color:#d4d4d4">  </span><span style="color:#679ad1">int</span><span style="color:#d4d4d4"> </span><span style="color:#aadafa">prev</span><span style="color:#d4d4d4"> = </span><span style="color:#bacdab">0</span><span style="color:#d4d4d4">;</span>
<span style="color:#d4d4d4">  </span><span style="color:#bc89bd">co_yield</span><span style="color:#d4d4d4"> </span><span style="color:#d4d4d4">==</span><span style="color:#bacdab">1</span><span style="color:#d4d4d4">;</span>
<span style="color:#d4d4d4">  </span><span style="color:#679ad1">int</span><span style="color:#d4d4d4"> </span><span style="color:#aadafa">current</span><span style="color:#d4d4d4"> = </span><span style="color:#bacdab">1</span><span style="color:#d4d4d4">;</span>
<span style="color:#d4d4d4">  </span><span style="color:#bc89bd">while</span><span style="color:#d4d4d4"> </span><span style="color:#cc76d1">(</span><span style="color:#679ad1">true</span><span style="color:#cc76d1">)</span><span style="color:#d4d4d4"> </span><span style="color:#cc76d1">{</span>
<span style="color:#d4d4d4">    </span><span style="color:#679ad1">int</span><span style="color:#d4d4d4"> </span><span style="color:#aadafa">next</span><span style="color:#d4d4d4"> = </span><span style="color:#aadafa">current</span><span style="color:#d4d4d4"> + </span><span style="color:#aadafa">prev</span><span style="color:#d4d4d4">;</span>
<span style="color:#d4d4d4">    </span><span style="color:#bc89bd">co_yield</span><span style="color:#d4d4d4"> </span><span style="color:#d4d4d4">==</span><span style="color:#aadafa">next</span><span style="color:#d4d4d4">;</span>
<span style="color:#d4d4d4">    </span><span style="color:#aadafa">prev</span><span style="color:#d4d4d4"> = </span><span style="color:#aadafa">current</span><span style="color:#d4d4d4">;</span>
<span style="color:#d4d4d4">    </span><span style="color:#aadafa">current</span><span style="color:#d4d4d4"> = </span><span style="color:#aadafa">next</span><span style="color:#d4d4d4">;</span>
<span style="color:#d4d4d4">  </span><span style="color:#cc76d1">}</span>
<span style="color:#f9d849">}</span>

<span style="color:#679ad1">template</span><span style="color:#d4d4d4">&lt;</span><span style="color:#679ad1">typename</span><span style="color:#d4d4d4"> </span><span style="color:#71c6b1">T</span><span style="color:#d4d4d4">&gt;</span>
<span style="color:#679ad1">void</span><span style="color:#d4d4d4"> </span><span style="color:#dcdcaf">print10Elements</span><span style="color:#f9d849">(</span><span style="color:#71c6b1">generator</span><span style="color:#d4d4d4">&lt;</span><span style="color:#71c6b1">T</span><span style="color:#679ad1">&gt;&amp;</span><span style="color:#d4d4d4"> </span><span style="color:#aadafa">gen</span><span style="color:#f9d849">)</span><span style="color:#f9d849"> {</span>
<span style="color:#d4d4d4">  </span><span style="color:#bc89bd">for</span><span style="color:#d4d4d4"> </span><span style="color:#cc76d1">(</span><span style="color:#679ad1">unsigned</span><span style="color:#d4d4d4"> </span><span style="color:#aadafa">i</span><span style="color:#d4d4d4"> = </span><span style="color:#bacdab">0</span><span style="color:#d4d4d4">; </span><span style="color:#aadafa">i</span><span style="color:#d4d4d4"> &lt; </span><span style="color:#bacdab">10</span><span style="color:#d4d4d4">; ++</span><span style="color:#aadafa">i</span><span style="color:#cc76d1">)</span><span style="color:#cc76d1"> {</span>
<span style="color:#d4d4d4">    </span><span style="color:#71c6b1">std</span><span style="color:#d4d4d4">::</span><span style="color:#aadafa">cerr</span><span style="color:#d4d4d4"> &lt;&lt; *</span><span style="color:#aadafa">gen</span><span style="color:#d4d4d4"> &lt;&lt; </span><span style="color:#c5947c">&quot;\n&quot;</span><span style="color:#d4d4d4">;</span>
<span style="color:#d4d4d4">    </span><span style="color:#d4d4d4">●++●▷</span><span style="color:#aadafa">gen</span><span style="color:#d4d4d4">;</span>
<span style="color:#d4d4d4">  </span><span style="color:#cc76d1">}</span>
<span style="color:#f9d849">}</span>

<span style="color:#679ad1">int</span><span style="color:#d4d4d4"> </span><span style="color:#dcdcaf">main</span><span style="color:#f9d849">() {</span>
<span style="color:#d4d4d4">  </span><span style="color:#71c6b1">std</span><span style="color:#d4d4d4">::</span><span style="color:#aadafa">cerr</span><span style="color:#d4d4d4"> &lt;&lt; </span><span style="color:#c5947c">&quot;Fibonacci sequence - here we go\n&quot;</span><span style="color:#d4d4d4">;</span>
<span style="color:#d4d4d4">  </span><span style="color:#71c6b1">generator</span><span style="color:#d4d4d4">&lt;</span><span style="color:#679ad1">int</span><span style="color:#d4d4d4">&gt; </span><span style="color:#aadafa">fib</span><span style="color:#d4d4d4"> = </span><span style="color:#dcdcaf">fibonacci</span><span style="color:#cc76d1">()</span><span style="color:#d4d4d4">;</span>
<span style="color:#d4d4d4">  </span><span style="color:#bc89bd">for</span><span style="color:#d4d4d4"> </span><span style="color:#cc76d1">(</span><span style="color:#679ad1">unsigned</span><span style="color:#d4d4d4"> </span><span style="color:#aadafa">i</span><span style="color:#d4d4d4"> = </span><span style="color:#bacdab">0</span><span style="color:#d4d4d4">; </span><span style="color:#aadafa">i</span><span style="color:#d4d4d4"> &lt; </span><span style="color:#bacdab">5</span><span style="color:#d4d4d4">; ++</span><span style="color:#aadafa">i</span><span style="color:#cc76d1">)</span><span style="color:#cc76d1"> {</span>
<span style="color:#d4d4d4">    </span><span style="color:#d4d4d4">++</span><span style="color:#aadafa">fib</span><span style="color:#d4d4d4">;</span>
<span style="color:#d4d4d4">  </span><span style="color:#cc76d1">}</span>
<span style="color:#d4d4d4">  </span><span style="color:#dcdcaf">print10Elements</span><span style="color:#cc76d1">(</span><span style="color:#d4d4d4">gen:</span><span style="color:#aadafa">fib</span><span style="color:#cc76d1">)</span><span style="color:#d4d4d4">;</span>
<span style="color:#f9d849">}</span>
</div>
<div class="a" style="left:2065px;top:273px;width:1.5px;height:749px;background:#171717"></div>
<div class="a" style="left:2065px;top:272.5px;width:34px;height:1.5px;background:#171717"></div>
<div class="a" style="left:2066px;top:530px;width:13px;height:0"></div>
<div class="a" style="left:2076px;top:530px;width:13px;height:15.3px;background:#8a8a8a"></div>
<div class="a" style="left:2076px;top:561.3px;width:13px;height:13px;background:#8a8a8a"></div>
<div class="a" style="left:2066px;top:574.3px;width:33px;height:4px;background:#a3a393"></div>
<div class="a" style="left:2066px;top:578px;width:33px;height:13.2px;background:#4c4b24"></div>
<div class="a" style="left:2076px;top:574.3px;width:13px;height:17px;background:#b0a183"></div>
<!--/TABS-->
<!-- PANEL -->
<div class="a" style="left:766px;top:1022px;width:1333px;height:297px;background:#181818;border-top:2px solid #2b2b2b"></div>
<!-- STATUSBAR -->
<div class="a" style="left:68px;top:1318px;width:2031px;height:52px;background:#3376cd"></div>
<!--PANELC-->
<div class="t" style="left:814px;top:1038px;line-height:54px;font-size:25.6px;color:#9d9d9d">PROBLEMS</div>
<div class="t" style="left:1015.5px;top:1038px;line-height:54px;font-size:25.9px;color:#e7e7e7">DEBUG CONSOLE</div>
<div class="a" style="left:1011px;top:1088.8px;width:237px;height:2.4px;background:#3376cd"></div>
<div class="a" style="left:1289.4px;top:1060.9px;width:5.2px;height:5.2px;border-radius:50%;background:#c5c5c5"></div>
<div class="a" style="left:1300.9px;top:1060.9px;width:5.2px;height:5.2px;border-radius:50%;background:#c5c5c5"></div>
<div class="a" style="left:1312.4px;top:1060.9px;width:5.2px;height:5.2px;border-radius:50%;background:#c5c5c5"></div>
<div class="a" style="left:1436px;top:1037px;width:394px;height:56px;border-radius:6px;background:#2f2f2f"></div>
<div class="t" style="left:1452px;top:1037px;line-height:56px;font-size:30.3px;color:#8f8f8f">Filter (e.g. text, !excl...</div>
<svg style="left:1845px;top:1044px" width="38" height="41" viewBox="0 0 38 41"><circle cx="22.5" cy="15" r="12.5" fill="none" stroke="#c5c5c5" stroke-width="2.4"/><path d="M13.5 24.5 L1.5 38.5" stroke="#c5c5c5" stroke-width="2.6"/></svg>
<svg style="left:1903px;top:1050px" width="36" height="30" viewBox="0 0 36 30"><path d="M1 2 H34 M1 10 H34 M1 18 H22 M1 26 H22" stroke="#c5c5c5" stroke-width="2.3"/><path d="M25 16.5 L33 25.5 M33 16.5 L25 25.5" stroke="#c5c5c5" stroke-width="2.5"/></svg>
<svg style="left:1968px;top:1055px" width="26" height="16" viewBox="0 0 26 16"><path d="M1.3 14.5 L13 2 L24.7 14.5" fill="none" stroke="#c5c5c5" stroke-width="2.3"/></svg>
<svg style="left:2032px;top:1052.5px" width="23" height="22" viewBox="0 0 23 22"><path d="M1.2 1 L21.8 21 M21.8 1 L1.2 21" stroke="#c5c5c5" stroke-width="2.3"/></svg>
<div class="t m" style="left:838.5px;top:1105.5px;line-height:43px;font-size:28.8px;color:#5292f7">Fibonacci sequence - here we go</div>
<div class="t m" style="left:838.5px;top:1146.5px;line-height:43px;font-size:28.8px;color:#5292f7">5</div>
<div class="a" style="left:766px;top:1275.5px;width:1333px;height:2px;background:#333333"></div>
<svg style="left:797px;top:1284.5px" width="17" height="27" viewBox="0 0 17 27"><path d="M1.5 1.5 L14.5 13.5 L1.5 25.5" fill="none" stroke="#c5c5c5" stroke-width="2.4"/></svg>
<svg style="left:95px;top:1322px" width="50" height="44" viewBox="0 0 50 44"><g fill="none" stroke="#ffffff" stroke-width="2.4" stroke-linejoin="round"><path d="M20.6 17.9 V8.5 L39.3 20.9 L28.1 28.6"/><path d="M13.6 29.3 C13.6 24.2 15.6 21.3 18.15 21.3 C20.7 21.3 22.7 24.2 22.7 29.3 C22.7 33.4 20.7 35.7 18.15 35.7 C15.6 35.7 13.6 33.4 13.6 29.3 Z"/><path d="M14 26.6 H22.3"/><path d="M9.3 23.5 L13 26.4 M27 23.5 L23.3 26.4 M8.9 29.7 H13.2 M23.1 29.7 H27.4 M9.3 35.8 L13 33.2 M27 35.8 L23.3 33.2"/></g></svg>
<div class="t" style="left:146px;top:1318px;line-height:52px;font-size:30.4px;color:#fff">Debug (corotest)</div>
<div class="t" style="left:415.5px;top:1318px;line-height:52px;font-size:30.5px;color:#fff">clangd: idle</div>
<div class="a" style="left:1259px;top:1318px;width:81.5px;height:52px;background:#4a74b0"></div>
<svg style="left:1284px;top:1327px" width="32" height="33" viewBox="0 0 32 33"><circle cx="12.5" cy="12.5" r="10.8" fill="none" stroke="#ffffff" stroke-width="2.2" stroke-opacity="0.85"/><path d="M12.5 7 V18 M7 12.5 H18" stroke="#ffffff" stroke-width="2.2" stroke-opacity="0.85"/><path d="M20 20 L30 30.5" stroke="#ffffff" stroke-width="2.4" stroke-opacity="0.85"/></svg>
<div class="t" style="left:1359.5px;top:1318px;line-height:52px;font-size:30.2px;color:#fff">Ln 21, Col 7</div>
<div class="t" style="left:1562.5px;top:1318px;line-height:52px;font-size:29.8px;color:#fff">Spaces: 2</div>
<div class="t" style="left:1735.5px;top:1318px;line-height:52px;font-size:30.2px;color:#fff">UTF-8</div>
<div class="t" style="left:1861px;top:1318px;line-height:52px;font-size:28.8px;color:#fff">LF</div>
<div class="t" style="left:1933px;top:1318px;line-height:52px;font-size:28.8px;color:#fff">C++</div>
<svg style="left:2031px;top:1327px" width="29" height="34" viewBox="0 0 29 34"><path d="M14.5 1.8 C8.3 1.8 5.3 6.5 5.3 12 V17.5 L2.2 25.2 H26.8 L23.7 17.5 V12 C23.7 6.5 20.7 1.8 14.5 1.8 Z" fill="none" stroke="#ffffff" stroke-width="2.3" stroke-linejoin="round"/><path d="M10.8 25.5 C11 28.3 12.5 29.6 14.5 29.6 C16.5 29.6 18 28.3 18.2 25.5" fill="none" stroke="#ffffff" stroke-width="2.3"/></svg>
<!--/PANELC-->
</div>
<div class="a" style="left:68px;top:52px;width:2031px;height:1266px;border-radius:19px 19px 0 0;border:1.5px solid rgba(255,255,255,0.12);border-bottom:none;border-top-color:rgba(255,255,255,0.5);pointer-events:none"></div>
</body></html>
